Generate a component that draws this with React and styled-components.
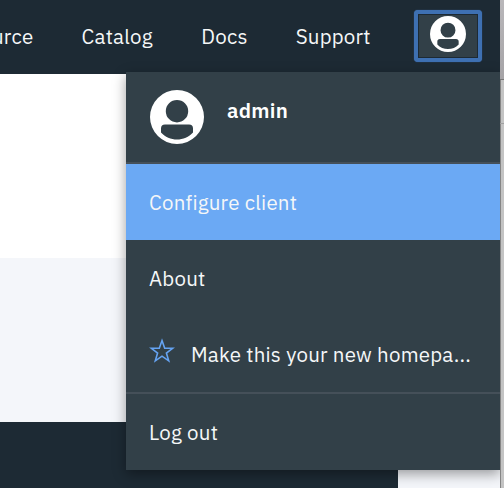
import React from "react";
import styled, { createGlobalStyle } from "styled-components";

const Global = createGlobalStyle`
  * { box-sizing: border-box; }
  body { margin: 0; overflow: hidden; font-family: "IBM Plex Sans", "Open Sans", sans-serif; }
`;

const Screen = styled.div`
  display: flex;
  width: 504px;
  height: 488px;
  overflow: hidden;
`;

const Page = styled.div`
  position: relative;
  display: flex;
  flex-direction: column;
  width: 500px;
  background: #fff;
`;

const Edge = styled.div`
  position: relative;
  z-index: 1;
  display: flex;
  flex-direction: column;
  width: 4px;
  background: linear-gradient(90deg, #858585 0, #858585 1px, #c2c2c2 1px, #c4c4c4 4px);
`;

const EdgeTop = styled.div`
  height: 80px;
  border-bottom: 1px solid #777;
  background: linear-gradient(#b9b7ba, #a5a3a6);
`;

const EdgeTab = styled.div`
  height: 44px;
  border-bottom: 1px solid #a0a0a0;
`;

const Header = styled.header`
  display: flex;
  flex: none;
  height: 74px;
  background: #1d2a34;
`;

const Nav = styled.nav`
  display: flex;
  flex: 1;
  padding-top: 22px;
`;

const NavLink = styled.a`
  flex: none;
  width: ${(p) => p.$width}px;
  margin-left: ${(p) => p.$offset || 0}px;
  color: #f5f7f8;
  font-size: 20.5px;
  line-height: 30px;
  letter-spacing: 0.21px;
  white-space: nowrap;
`;

const UserButton = styled.button`
  display: flex;
  justify-content: center;
  align-items: flex-start;
  width: 68px;
  height: 52px;
  margin: 10px 18px 0 0;
  padding: 2px 0 0;
  color: #fff;
  background: #324048;
  border: 4px solid #3e70b2;
  border-radius: 4px;
  box-shadow: inset 0 0 0 1px #1d2a34, 0 0 1px #3e70b2;
`;

const Menu = styled.div`
  position: absolute;
  top: 72px;
  left: 126px;
  width: 374px;
  height: 398px;
  color: #f5f7f8;
  background: #324048;
  box-shadow: 0 4px 12px rgba(0, 0, 0, 0.38);
`;

const Profile = styled.div`
  display: flex;
  gap: 23px;
  height: 92px;
  padding: 18px 24px 0;
  color: #fff;
  border-bottom: 2px solid #455059;
`;

const UserName = styled.strong`
  margin-top: 6px;
  font-size: 20.5px;
  font-weight: 600;
  line-height: 30px;
  letter-spacing: 0.3px;
`;

const MenuItem = styled.div`
  display: flex;
  align-items: center;
  height: ${(p) => (p.$divided ? 78 : 76)}px;
  padding: 1px 23px 0;
  font-size: 20.5px;
  line-height: 30px;
  letter-spacing: 0.22px;
  white-space: nowrap;
  background: ${(p) => (p.$active ? "#6ba9f4" : "transparent")};
  border-top: ${(p) => (p.$divided ? "2px solid #455059" : "0")};
`;

const StarIcon = styled.svg`
  flex: none;
  width: 26px;
  height: 26px;
  margin: -7px 16px 0 0;
  fill: none;
  stroke: #65a3f2;
  stroke-width: 1.6;
`;

const Intro = styled.div`
  height: 184px;
`;

const Band = styled.div`
  display: flex;
  align-items: flex-end;
  flex: 1;
  background: #f4f6fa;
`;

const Footer = styled.div`
  width: 398px;
  height: 66px;
  background: #1d2a34;
`;

const Avatar = ({ size }) => (
  <svg width={size} height={size} viewBox="0 0 54 54" fill="currentColor">
    <path
      fillRule="evenodd"
      d="M27 0a27 27 0 1 1 0 54a27 27 0 1 1 0-54zM27 10a11.2 11.2 0 1 0 0 22.4a11.2 11.2 0 1 0 0-22.4zM15 34.4q-4 0-4 4v4.2c4 4.6 10 7 16 7s12-2.400 16-7v-4.200q0-4-4-4z"
    />
  </svg>
);

export default function App() {
  return (
    <Screen>
      <Global />
      <Page>
        <Header>
          <Nav>
            <NavLink $width={89.6} $offset={-8}>urce</NavLink>
            <NavLink $width={119.7}>Catalog</NavLink>
            <NavLink $width={94.4}>Docs</NavLink>
            <NavLink $width={80}>Support</NavLink>
          </Nav>
          <UserButton aria-label="User menu">
            <Avatar size={36} />
          </UserButton>
        </Header>
        <Intro />
        <Band>
          <Footer />
        </Band>
        <Menu>
          <Profile>
            <Avatar size={54} />
            <UserName>admin</UserName>
          </Profile>
          <MenuItem $active>Configure client</MenuItem>
          <MenuItem>About</MenuItem>
          <MenuItem>
            <StarIcon viewBox="0 0 26 26">
              <path d="M13 2.600L15.700 10.300H23.600L17.400 15L19.700 22.800L13 18.200L6.300 22.800L8.600 15L2.400 10.300H10.300Z" />
            </StarIcon>
            Make this your new homepa...
          </MenuItem>
          <MenuItem $divided>Log out</MenuItem>
        </Menu>
      </Page>
      <Edge>
        <EdgeTop />
        <EdgeTab />
      </Edge>
    </Screen>
  );
}
